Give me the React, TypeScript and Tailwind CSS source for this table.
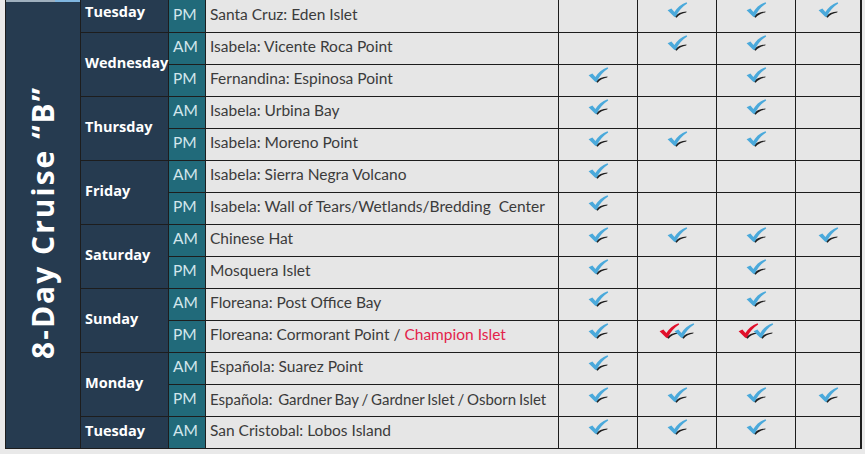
import React from "react";

type Row = {
  ampm: "AM" | "PM";
  loc: React.ReactNode;
  checks: number[]; // 0 none, 1 blue, 2 red+blue
  tight?: boolean;
};

type Day = { name: string; span: number };

const days: Day[] = [
  { name: "Tuesday", span: 1 },
  { name: "Wednesday", span: 2 },
  { name: "Thursday", span: 2 },
  { name: "Friday", span: 2 },
  { name: "Saturday", span: 2 },
  { name: "Sunday", span: 2 },
  { name: "Monday", span: 2 },
  { name: "Tuesday", span: 1 },
];

const rows: Row[] = [
  { ampm: "PM", loc: "Santa Cruz: Eden Islet", checks: [0, 1, 1, 1] },
  { ampm: "AM", loc: "Isabela: Vicente Roca Point", checks: [0, 1, 1, 0] },
  { ampm: "PM", loc: "Fernandina: Espinosa Point", checks: [1, 0, 1, 0] },
  { ampm: "AM", loc: "Isabela: Urbina Bay", checks: [1, 0, 1, 0] },
  { ampm: "PM", loc: "Isabela: Moreno Point", checks: [1, 1, 1, 0] },
  { ampm: "AM", loc: "Isabela: Sierra Negra Volcano", checks: [1, 0, 0, 0] },
  {
    ampm: "PM",
    loc: "Isabela: Wall of Tears/Wetlands/Bredding\u00a0 Center",
    checks: [1, 0, 0, 0],
  },
  { ampm: "AM", loc: "Chinese Hat", checks: [1, 1, 1, 1] },
  { ampm: "PM", loc: "Mosquera Islet", checks: [1, 0, 1, 0] },
  { ampm: "AM", loc: "Floreana: Post Office Bay", checks: [1, 0, 1, 0] },
  {
    ampm: "PM",
    loc: (
      <>
        Floreana: Cormorant Point / <span className="text-[#e3234b]">Champion Islet</span>
      </>
    ),
    checks: [1, 2, 2, 0],
  },
  { ampm: "AM", loc: "Española: Suarez Point", checks: [1, 0, 0, 0] },
  {
    ampm: "PM",
    loc: "Española:\u00a0 Gardner Bay / Gardner Islet / Osborn Islet",
    checks: [1, 1, 1, 1],
    tight: true,
  },
  { ampm: "AM", loc: "San Cristobal: Lobos Island", checks: [1, 1, 1, 0] },
];

// day that starts at each row index
const dayAt: Record<number, Day> = {};
{
  let i = 0;
  for (const d of days) {
    dayAt[i] = d;
    i += d.span;
  }
}

function Check({ color }: { color: string }) {
  return (
    <svg width="21" height="17" viewBox="0 0 21 17">
      <path
        d="M7.6 14.6 C10.2 11.6 14.2 9.8 19.6 9.4 L19.2 10.5 C15.2 11 11.8 13 9.6 15.8 Z"
        fill="#1f1f1f"
      />
      <path
        d="M0.6 8.2 L4.4 6.4 L7.4 10 C10 5.6 14 2 19.6 0.2 L20.2 1.6 C15.4 4.4 11.6 9 8.8 14.8 L7.2 14.8 Z"
        fill={color}
      />
    </svg>
  );
}

function CheckCell({ v }: { v: number }) {
  return (
    <div className="flex items-start justify-center bg-[#e6e6e6] pt-[2px]">
      {v === 1 ? <Check color="#4aa9db" /> : null}
      {v === 2 ? (
        <div className="flex -space-x-[6px]">
          <Check color="#e1102b" />
          <Check color="#4aa9db" />
        </div>
      ) : null}
    </div>
  );
}

export default function App() {
  return (
    <main
      className="h-[454px] w-[865px] overflow-hidden bg-[#e9e9e9]"
      style={{ fontFamily: "Lato, 'Open Sans', sans-serif" }}
    >
      <div className="ml-[5px] w-[857px] border-x border-b border-[#1d1d1d] bg-[#1d1d1d]">
        <div className="grid grid-cols-[74px_87px_36px_352px_78px_78px_78px_64px] grid-rows-[32px_repeat(13,31px)] gap-px">
          <div className="row-[span_14/span_14] flex flex-col bg-[#263b50]">
            <div className="flex h-[2px]">
              <div className="w-[49px] bg-[#9fb0be]" />
              <div className="flex-1 bg-[#7fb6e0]" />
            </div>
            <div className="flex flex-1 items-center justify-center pb-[6px]">
              <span
                className="rotate-180 text-[30px] leading-none font-bold tracking-[2px] whitespace-nowrap text-white [writing-mode:vertical-rl]"
                style={{ fontFamily: "'Open Sans', sans-serif" }}
              >
                8-Day Cruise &ldquo;B&rdquo;
              </span>
            </div>
          </div>

          {rows.map((r, i) => (
            <React.Fragment key={i}>
              {dayAt[i] ? (
                <div
                  className={
                    "flex items-center bg-[#263b50] pl-[4px] text-[14.5px] font-bold whitespace-nowrap text-white " +
                    (dayAt[i].span === 2 ? "row-span-2 pb-[3px]" : i === 0 ? "pb-[8px]" : "pb-[3px]")
                  }
                  style={{ fontFamily: "'Open Sans', sans-serif" }}
                >
                  {dayAt[i].name}
                </div>
              ) : null}
              <div className="flex items-center bg-[#216a7a] pb-[3px] pl-[4px] text-[15.5px] text-[#d3e6ec]">
                {r.ampm}
              </div>
              <div
                className={
                  "flex items-center overflow-hidden bg-[#e6e6e6] pb-[3px] pl-[4px] whitespace-nowrap text-[#3b3b3b] " +
                  (r.tight ? "text-[15px] [word-spacing:-1px]" : "text-[15.5px]")
                }
              >
                <span>{r.loc}</span>
              </div>
              {r.checks.map((c, j) => (
                <CheckCell key={j} v={c} />
              ))}
            </React.Fragment>
          ))}
        </div>
      </div>
    </main>
  );
}
